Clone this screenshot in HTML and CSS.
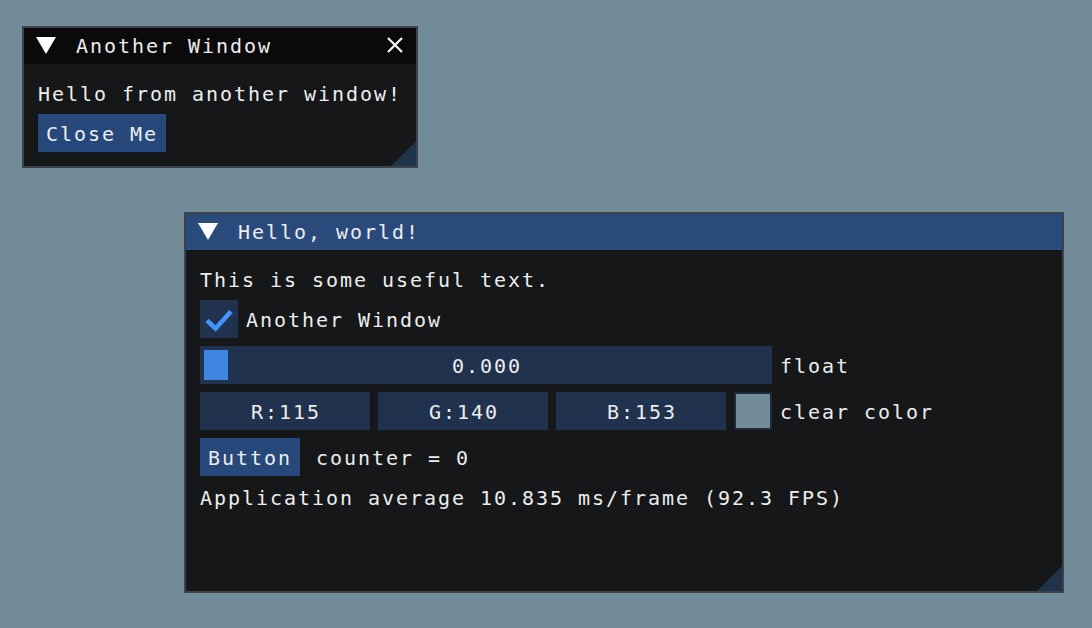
FILE: index.html
```html
<!DOCTYPE html>
<html>
<head>
<meta charset="utf-8">
<link rel="stylesheet" href="styles.css">
</head>
<body>
<div class="window win-another">
  <div class="titlebar">
    <svg class="arrow" viewBox="0 0 20 17"><polygon points="0,0 20,0 10,17"/></svg>
    <span class="t">Another Window</span>
    <svg class="close" viewBox="0 0 16 16"><path d="M1 1 L15 15 M15 1 L1 15"/></svg>
  </div>
  <div class="content">
    <span class="t">Hello from another window!</span>
    <div class="btn"><span class="t">Close Me</span></div>
  </div>
  <div class="grip"></div>
</div>

<div class="window win-hello">
  <div class="titlebar">
    <svg class="arrow" viewBox="0 0 20 17"><polygon points="0,0 20,0 10,17"/></svg>
    <span class="t">Hello, world!</span>
  </div>
  <div class="content">
    <span class="t">This is some useful text.</span>
    <div class="row">
      <div class="check"><svg viewBox="0 0 38 38"><polyline points="7,20.5 15.5,28.5 31,11.5"/></svg></div>
      <span class="t">Another Window</span>
    </div>
    <div class="row">
      <div class="frame slider"><div class="grab"></div><span class="t">0.000</span></div>
      <span class="t">float</span>
    </div>
    <div class="row">
      <div class="frame comp"><span class="t">R:115</span></div>
      <div class="frame comp"><span class="t">G:140</span></div>
      <div class="frame comp"><span class="t">B:153</span></div>
      <div class="swatch"></div>
      <span class="t">clear color</span>
    </div>
    <div class="row wide">
      <div class="btn"><span class="t">Button</span></div>
      <span class="t">counter = 0</span>
    </div>
    <span class="t">Application average 10.835 ms/frame (92.3 FPS)</span>
  </div>
  <div class="grip"></div>
</div>
</body>
</html>
```

FILE: styles.css
```css
body {
  margin: 0;
  width: 1092px;
  height: 628px;
  overflow: hidden;
  position: relative;
  background: #738c99;
  font-family: "DejaVu Sans Mono", monospace;
  font-size: 20px;
  letter-spacing: 1.96px;
  color: #ededed;
}

.t {
  display: block;
  box-sizing: border-box;
  height: 26px;
  line-height: 24px;
  padding-top: 2px;
  white-space: pre;
}

.window {
  position: absolute;
  box-sizing: border-box;
  border: 2px solid #3f414b;
  background: #151718;
  display: flex;
  flex-direction: column;
}

.win-another {
  left: 22px;
  top: 26px;
  width: 396px;
  height: 142px;
}

.win-hello {
  left: 184px;
  top: 212px;
  width: 880px;
  height: 381px;
}

.titlebar {
  flex: none;
  height: 36px;
  box-sizing: border-box;
  padding: 0 0 2px 12px;
  display: flex;
  align-items: center;
  background: #0a0a0a;
}

.win-hello .titlebar {
  background: #294a7a;
}

.arrow {
  width: 20px;
  height: 17px;
  margin-right: 20px;
  fill: #ffffff;
}

.close {
  width: 16px;
  height: 16px;
  margin-left: auto;
  margin-right: 13px;
  stroke: #f4f4f4;
  stroke-width: 2.3;
  fill: none;
}

.content {
  padding: 16px 14px 14px;
  display: flex;
  flex-direction: column;
  align-items: flex-start;
  gap: 8px;
}

.row {
  display: flex;
  align-items: center;
  gap: 8px;
}

.row.wide {
  gap: 16px;
}

.btn {
  height: 38px;
  padding: 0 8px;
  display: flex;
  align-items: center;
  background: #26487a;
}

.frame {
  height: 38px;
  display: flex;
  align-items: center;
  justify-content: center;
  background: #20324d;
}

.check {
  width: 38px;
  height: 38px;
  background: #20324d;
}

.check svg {
  display: block;
  width: 38px;
  height: 38px;
  fill: none;
  stroke: #4296fa;
  stroke-width: 4.6;
}

.slider {
  position: relative;
  width: 572px;
}

.slider .t {
  padding-left: 2px;
}

.grab {
  position: absolute;
  left: 4px;
  top: 4px;
  width: 24px;
  height: 30px;
  background: #3d85e0;
}

.comp {
  width: 170px;
}

.comp .t {
  padding-left: 2px;
}

.swatch {
  width: 38px;
  height: 38px;
  box-sizing: border-box;
  border: 2px solid #1c2a3e;
  background: #738c99;
}

.grip {
  position: absolute;
  right: 0;
  bottom: 0;
  width: 25px;
  height: 25px;
  background: #1f3349;
  clip-path: polygon(100% 0, 100% 100%, 0 100%);
}
```
